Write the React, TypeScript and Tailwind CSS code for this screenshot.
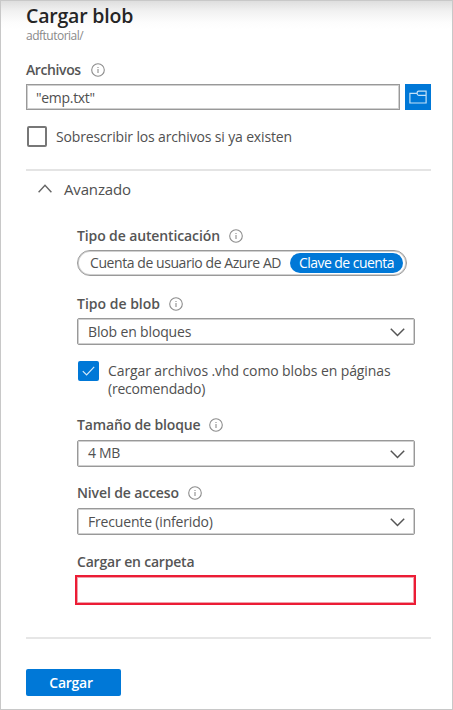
import React from "react";

function Info() {
  return (
    <svg className="block h-[14px] w-[14px] shrink-0" viewBox="0 0 14 14" fill="none" stroke="#8c8c8c">
      <circle cx="7" cy="7" r="6.3" strokeWidth="1.1" />
      <path d="M7 6.1V10" strokeWidth="1.1" />
      <path d="M7 3.9V5" strokeWidth="1.1" />
    </svg>
  );
}

function Label({ text, tracking, gap, info = true }: { text: string; tracking: string; gap?: string; info?: boolean }) {
  return (
    <div className={`flex h-5 items-center text-[14px] leading-5 font-semibold text-[#555] ${gap ?? ""}`}>
      <span className={tracking}>{text}</span>
      {info && <Info />}
    </div>
  );
}

function Select({ value, tracking, lift }: { value: string; tracking: string; lift?: string }) {
  return (
    <div className="flex h-[27px] w-[338px] items-center justify-between rounded-[2px] border border-[#999] bg-white pr-[9px] pl-[10px] text-[14px] text-[#505050] shadow-[inset_0_0_0_1px_#d0d0d0]">
      <span className={`${tracking} ${lift ?? ""}`}>{value}</span>
      <svg className="mt-px block h-[9px] w-[15px]" viewBox="0 0 15 9" fill="none" stroke="#555" strokeWidth="1.5">
        <path d="M.8.8 7.5 7.5 14.2.8" />
      </svg>
    </div>
  );
}

export default function App() {
  return (
    <div className="h-[710px] w-[453px] overflow-hidden border border-[#c8c8c8] bg-white bg-[linear-gradient(to_bottom,#dedede_0px,#f1f1f1_10px,#fcfcfc_21px,#ffffff_28px)] pl-[25px] font-['Open_Sans','Noto_Sans',sans-serif] whitespace-nowrap">
      <h1 className="mt-[2px] h-[26px] text-[19.5px] leading-[26px] font-semibold tracking-[-0.2px] text-[#252525]">Cargar blob</h1>
      <div className="h-4 text-[12px] leading-[13px] tracking-[-0.5px] text-[#8a8a8a]">adftutorial/</div>
      <div className="mt-[15px]">
        <Label text="Archivos" tracking="tracking-[-0.4px]" gap="gap-[10px]" />
      </div>
      <div className="mt-1 flex gap-[5px]">
        <div className="flex h-[26px] w-[374px] items-center border border-[#999] bg-white pl-[9px] text-[14px] text-[#505050] shadow-[inset_0_0_0_1px_#d0d0d0]">
          <span className="tracking-[-0.3px]">"emp.txt"</span>
        </div>
        <div className="flex h-[26px] w-[26px] items-center justify-center bg-[#0078d7]">
          <svg className="block h-[14px] w-[18px]" viewBox="0 0 18 14" fill="none" stroke="#c4e1f8" strokeWidth="1.2">
            <path d="M8 3.4H.9V13H17.1V1.1H9.6Q8.1 1.1 8.1 3.2 8.1 5.3 9.6 5.3H17.1" />
          </svg>
        </div>
      </div>
      <div className="mt-4 flex h-[21px] items-center gap-[9px] text-[14px] text-[#505050]">
        <div className="ml-px h-[21px] w-[20px] rounded-[2px] border-2 border-[#777] bg-white" />
        <span className="tracking-[-0.15px]">Sobrescribir los archivos si ya existen</span>
      </div>
      <div className="mt-[22px] h-[2px] w-[405px] bg-[#e4e4e4]" />
      <div className="mt-[8px] flex h-5 items-center gap-3 pl-[12px] text-[15px] text-[#505050]">
        <svg className="-mt-[2px] block h-[9px] w-[14px]" viewBox="0 0 14 9" fill="none" stroke="#666" strokeWidth="1.4">
          <path d="M.6 8.2 7 1.2l6.4 7" />
        </svg>
        <span className="tracking-[-0.15px]">Avanzado</span>
      </div>

      <div className="mt-[27px] pl-[51px]">
        <Label text="Tipo de autenticación" tracking="tracking-[-0.12px]" gap="gap-[9px]" />
        <div className="mt-1 flex h-[26px] w-[330px] items-center rounded-full border border-[#999] bg-white pl-[12px] text-[14px] leading-[18px] text-[#505050] shadow-[inset_0_0_0_1px_#d0d0d0]">
          <span className="w-[200px] pb-px tracking-[-0.43px]">Cuenta de usuario de Azure AD</span>
          <span className="flex h-5 w-[113px] items-center justify-center rounded-full bg-[#0078d7] pb-px font-medium tracking-[-0.55px] text-white">
            Clave de cuenta
          </span>
        </div>
        <div className="mt-[18px]">
          <Label text="Tipo de blob" tracking="tracking-[0px]" gap="gap-[9px]" />
        </div>
        <div className="mt-1">
          <Select value="Blob en bloques" tracking="tracking-[-0.15px]" />
        </div>
        <div className="mt-4 flex gap-[9px] pl-px">
          <div className="flex h-[20px] w-[21px] items-center justify-center rounded-[2px] bg-[#0078d7]">
            <svg className="block h-[10px] w-[13px]" viewBox="0 0 13 10" fill="none" stroke="#d5eafa" strokeWidth="1.2">
              <path d="M.8 5.2 4.6 9 12.2.8" />
            </svg>
          </div>
          <div className="mt-px text-[14px] leading-[17.5px] text-[#505050]">
            <div className="tracking-[-0.1px]">Cargar archivos .vhd como blobs en páginas</div>
            <div className="tracking-[-0.2px]">(recomendado)</div>
          </div>
        </div>
        <div className="mt-[18px]">
          <Label text="Tamaño de bloque" tracking="tracking-[-0.15px]" gap="gap-[9px]" />
        </div>
        <div className="mt-[5px]">
          <Select value="4 MB" tracking="tracking-[-0.3px]" lift="-mt-[3px]" />
        </div>
        <div className="mt-4">
          <Label text="Nivel de acceso" tracking="tracking-[-0.13px]" gap="gap-[9px]" />
        </div>
        <div className="mt-[5px]">
          <Select value="Frecuente (inferido)" tracking="tracking-[-0.17px]" />
        </div>
        <div className="mt-[17px]">
          <Label text="Cargar en carpeta" tracking="tracking-[-0.2px]" info={false} />
        </div>
        <div className="mt-[3px] -ml-[2px] h-[30px] w-[341px] border-2 border-[#ec1c35] bg-white shadow-[inset_0_0_0_1px_#f0a0aa]" />
      </div>

      <div className="mt-8 h-[2px] w-[405px] bg-[#e6e6e6]" />
      <div className="mt-[30px] flex h-[27px] w-[95px] items-center justify-center rounded-[2px] bg-[#0078d7] pr-[5px] text-[14px] font-semibold tracking-[-0.25px] text-white">
        Cargar
      </div>
    </div>
  );
}
